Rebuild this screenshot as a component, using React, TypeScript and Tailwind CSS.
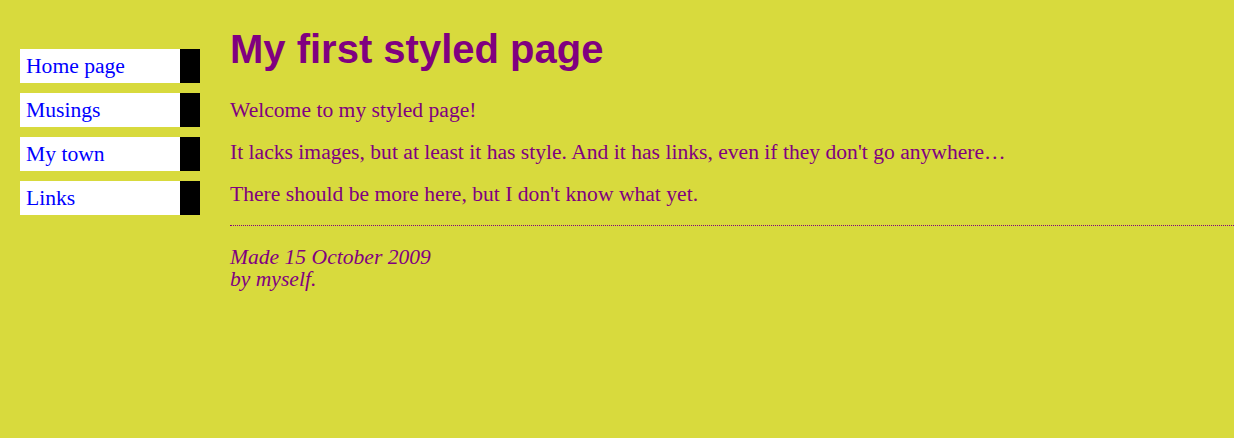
const links = ["Home page", "Musings", "My town", "Links"];

export default function App() {
  return (
    <div className="flex items-start min-h-screen w-full bg-[#d8da3d] text-[#800080] font-['Liberation_Serif',serif]">
      <ul className="ml-[20px] mt-[49px] w-[180px] flex flex-col gap-[10px] list-none p-0">
        {links.map((l) => (
          <li
            key={l}
            className="bg-white border-r-[20px] border-black py-[6px] px-[6px] text-[21.6px] leading-[22px]"
          >
            <a href="#" className="text-[#0000ff] no-underline">
              {l}
            </a>
          </li>
        ))}
      </ul>
      <main className="ml-[30px] flex-1 pt-[26px]">
        <h1 className="m-0 mb-[26.5px] text-[40px] leading-[46px] font-bold font-['Liberation_Sans',Arial,sans-serif]">
          My first styled page
        </h1>
        <p className="mb-[20px] text-[21.6px] leading-[22px]">Welcome to my styled page!</p>
        <p className="mb-[20px] text-[21.6px] leading-[22px]">
          It lacks images, but at least it has style. And it has links, even if they don't go anywhere…
        </p>
        <p className="mb-[20px] text-[21.6px] leading-[22px]">There should be more here, but I don't know what yet.</p>
        <address className="border-t border-dotted border-[#800080] pt-[20px] text-[21.6px] leading-[22px] italic">
          Made 15 October 2009
          <br />
          by myself.
        </address>
      </main>
    </div>
  );
}
